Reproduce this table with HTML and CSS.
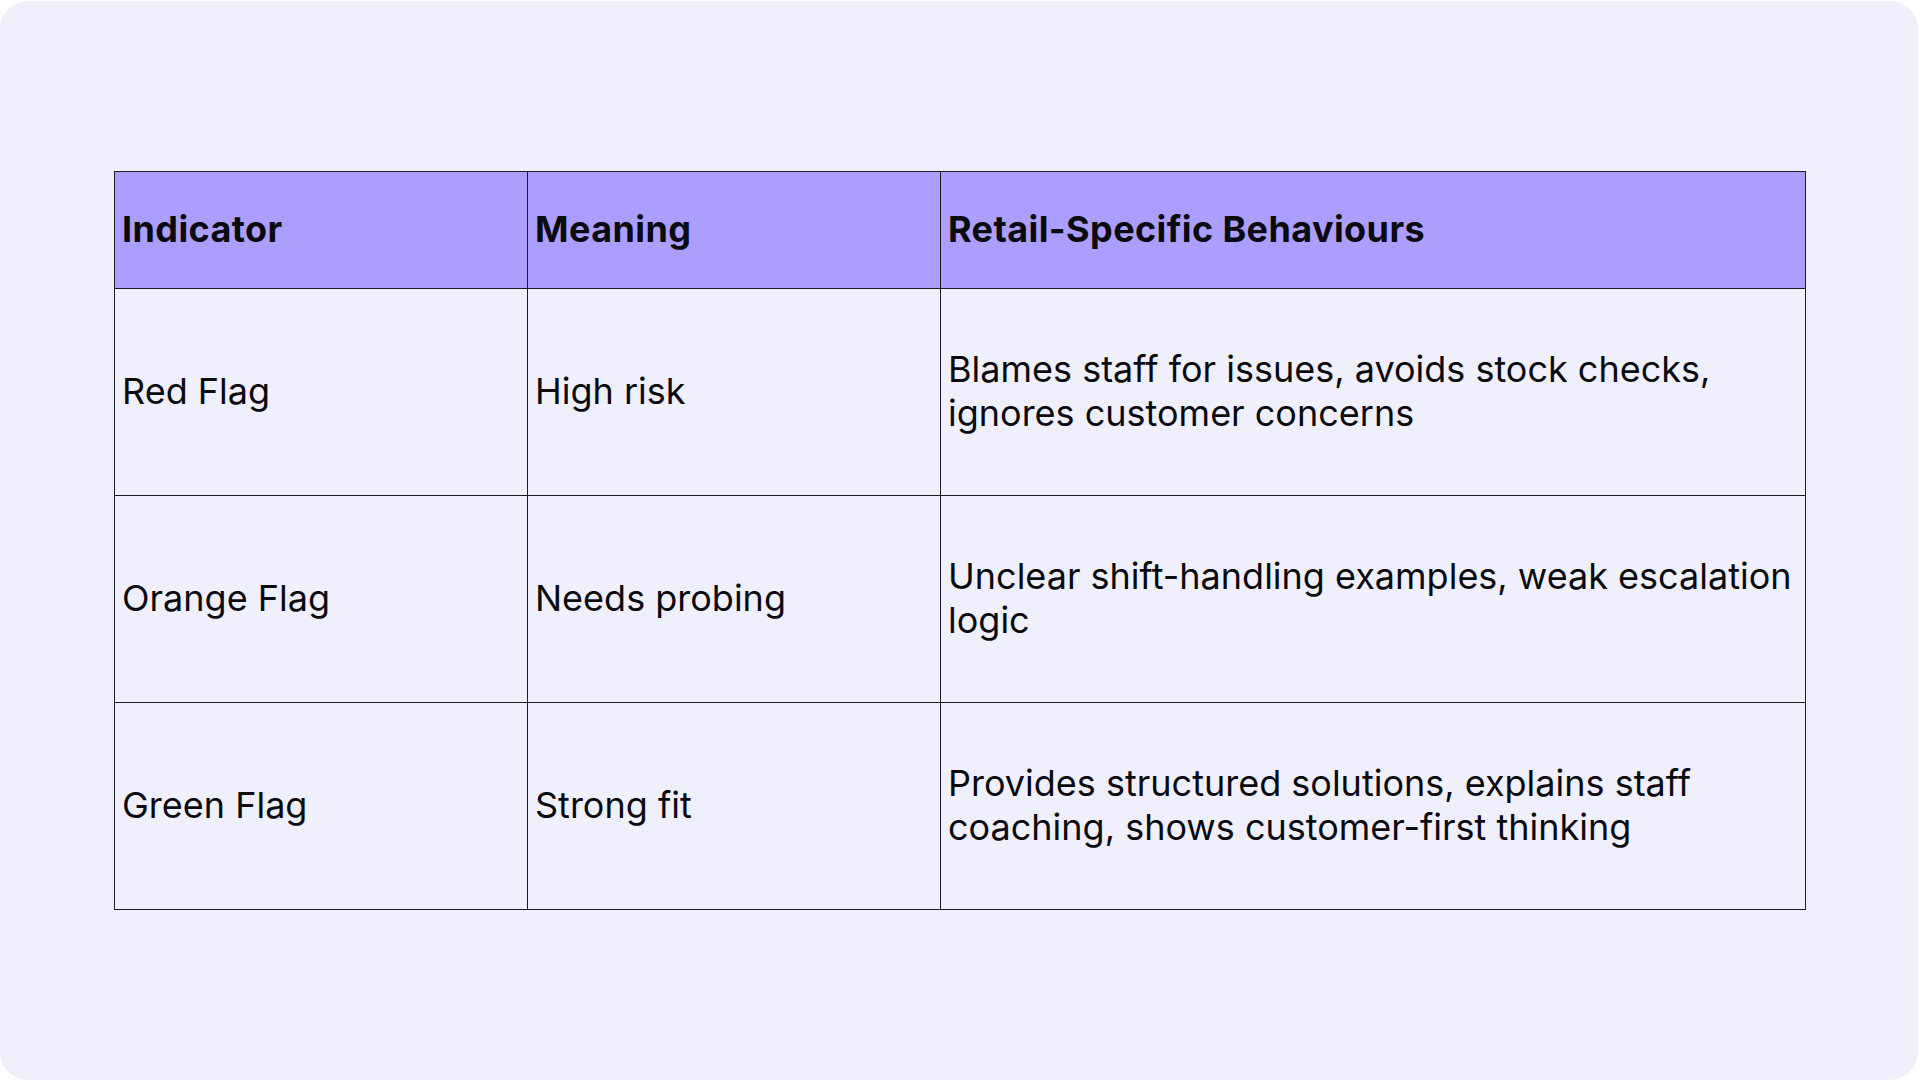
FILE: index.html
```html
<!DOCTYPE html>
<html lang="en">
<head>
<meta charset="utf-8">
<title>Flags</title>
<link rel="stylesheet" href="styles.css">
</head>
<body>
<main class="card">
  <table class="flags">
    <colgroup>
      <col class="c1">
      <col class="c2">
      <col class="c3">
    </colgroup>
    <thead>
      <tr>
        <th>Indicator</th>
        <th>Meaning</th>
        <th>Retail-Specific Behaviours</th>
      </tr>
    </thead>
    <tbody>
      <tr>
        <td>Red Flag</td>
        <td>High risk</td>
        <td>Blames staff for issues, avoids stock checks,<br>ignores customer concerns</td>
      </tr>
      <tr>
        <td>Orange Flag</td>
        <td>Needs probing</td>
        <td>Unclear shift-handling examples, weak escalation<br>logic</td>
      </tr>
      <tr>
        <td>Green Flag</td>
        <td>Strong fit</td>
        <td>Provides structured solutions, explains staff<br>coaching, shows customer-first thinking</td>
      </tr>
    </tbody>
  </table>
</main>
</body>
</html>
```
FILE: styles.css
```css
html, body {
  margin: 0;
  padding: 0;
  background: #ffffff;
}
body {
  width: 1920px;
  height: 1080px;
  overflow: hidden;
}
.card {
  box-sizing: border-box;
  width: 1918px;
  height: 1079px;
  margin-top: 1px;
  border-radius: 28px;
  background: #f0f0fd;
  padding: 170px 0 0 114px;
}
.flags {
  border-collapse: collapse;
  table-layout: fixed;
  width: 1691px;
  font-family: Inter, "Noto Sans", sans-serif;
  font-size: 36px;
  letter-spacing: 0;
  color: #0a0a0f;
}
.c1 { width: 413px; }
.c2 { width: 413px; }
.c3 { width: 865px; }
.flags th,
.flags td {
  border: 1px solid #1c1c22;
  text-align: left;
  vertical-align: middle;
  padding: 0 6px 3px 7px;
  line-height: 44px;
  white-space: nowrap;
}
.flags thead tr {
  height: 117px;
  background: #ab9efe;
}
.flags th {
  font-weight: 700;
  letter-spacing: 0.4px;
}
.flags tbody tr {
  height: 207px;
}
.flags td {
  font-weight: 400;
}
```
